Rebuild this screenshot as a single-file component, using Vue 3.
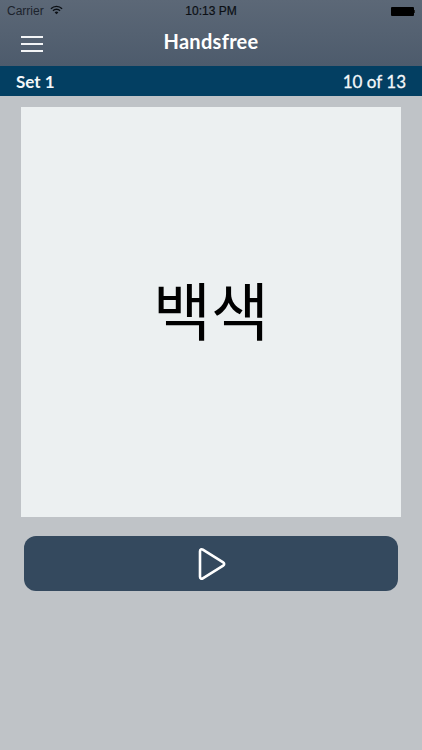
<script setup>
const word = '백색'
</script>

<template>
  <div class="screen">
    <header class="nav">
      <div class="status">
        <div class="status-left">
          <span>Carrier</span>
          <svg class="wifi" width="13" height="10" viewBox="0 0 14 10">
            <path d="M1 3.6a8.5 8.5 0 0 1 12 0" fill="none" stroke="#0b0f14" stroke-width="1.5" />
            <path d="M3.2 5.7a5.4 5.4 0 0 1 7.6 0" fill="none" stroke="#0b0f14" stroke-width="1.5" />
            <path d="M7 9.6 5 7.6a2.9 2.9 0 0 1 4 0z" fill="#0b0f14" />
          </svg>
        </div>
        <span class="clock">10:13 PM</span>
        <div class="status-right">
          <span class="battery"></span>
          <span class="battery-tip"></span>
        </div>
      </div>
      <div class="title-row">
        <button class="menu" aria-label="Menu"><i></i><i></i><i></i></button>
        <h1>Handsfree</h1>
      </div>
    </header>
    <div class="set-bar">
      <span>Set 1</span>
      <span>10 of 13</span>
    </div>
    <main class="content">
      <section class="card">{{ word }}</section>
      <button class="play" aria-label="Play">
        <svg width="30" height="34" viewBox="0 0 30 34">
          <path d="M3 4.2c0-1.6 1.500-2.400 2.800-1.600l20.400 12.800c1.300.8 1.300 2.500 0 3.300L5.800 31.400C4.500 32.200 3 31.400 3 29.800z" fill="none" stroke="#fff" stroke-width="2.600" stroke-linejoin="round" />
        </svg>
      </button>
    </main>
  </div>
</template>

<style scoped>
.screen {
  width: 422px;
  height: 750px;
  overflow: hidden;
  display: flex;
  flex-direction: column;
  background: #bfc3c7;
  font-family: Lato, "Noto Sans", sans-serif;
}
.nav {
  height: 66px;
  box-sizing: border-box;
  background: linear-gradient(#5c6877, #4d5b6c);
  display: flex;
  flex-direction: column;
}
.status {
  height: 22px;
  padding: 0 7px;
  display: grid;
  grid-template-columns: 1fr auto 1fr;
  align-items: center;
  font-family: "Liberation Sans", sans-serif;
  font-size: 12px;
  color: #10151b;
}
.status-left {
  display: flex;
  align-items: center;
  gap: 6px;
  color: #1c232c;
}
.wifi {
  margin-top: -3px;
}
.clock {
  color: #0b0f14;
  -webkit-text-stroke: 0.2px #0b0f14;
}
.status-right {
  display: flex;
  justify-content: flex-end;
  align-items: center;
}
.battery {
  width: 23px;
  height: 9px;
  border-radius: 1px;
  background: #000;
}
.battery-tip {
  width: 1.5px;
  height: 3px;
  background: #222;
}
.title-row {
  flex: 1;
  position: relative;
  display: flex;
  align-items: center;
  justify-content: center;
}
.menu {
  position: absolute;
  left: 21px;
  top: 14px;
  width: 22px;
  padding: 0;
  border: 0;
  background: none;
  display: flex;
  flex-direction: column;
  gap: 5px;
}
.menu i {
  display: block;
  height: 2px;
  background: #f2f4f6;
}
h1 {
  margin: 0 0 7px;
  font-size: 20px;
  font-weight: 700;
  letter-spacing: 0.3px;
  color: #fff;
}
.set-bar {
  height: 30px;
  padding: 0 16px;
  display: flex;
  justify-content: space-between;
  align-items: center;
  background: #033f62;
  color: #f4f7f9;
  font-size: 17px;
  font-weight: 700;
}
.set-bar span:last-child {
  font-weight: 400;
  -webkit-text-stroke: 0.3px #f4f7f9;
}
.content {
  flex: 1;
  display: flex;
  flex-direction: column;
  align-items: center;
  padding-top: 11px;
  background: #bfc3c7;
}
.card {
  width: 380px;
  height: 410px;
  box-sizing: border-box;
  padding-bottom: 10px;
  display: flex;
  align-items: center;
  justify-content: center;
  background: #ecf0f1;
  color: #000;
  font-family: "Noto Sans CJK KR", sans-serif;
  font-size: 63px;
  line-height: 1;
}
.play {
  width: 374px;
  height: 55px;
  margin-top: 19px;
  padding: 0 0 0 2px;
  border: 0;
  border-radius: 12px;
  background: #34495e;
  display: flex;
  align-items: center;
  justify-content: center;
}
</style>
